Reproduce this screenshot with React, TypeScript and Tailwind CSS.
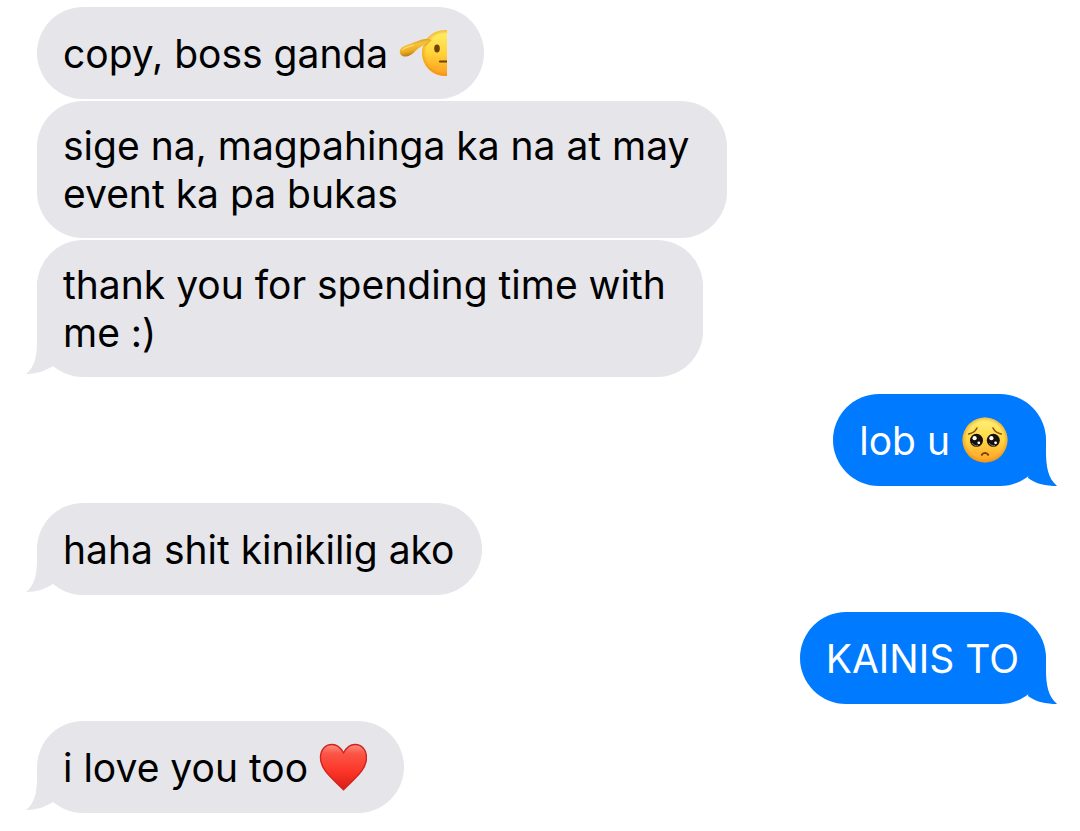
import { Fragment } from "react";
import type { ReactNode } from "react";
import clsx from "clsx";

interface Message {
  id: number;
  lines: string[];
  emoji?: ReactNode;
  trailing?: boolean;
}

interface MessageGroup {
  from: "me" | "them";
  messages: Message[];
}

const groups: MessageGroup[] = [
  {
    from: "them",
    messages: [
      { id: 1, lines: ["copy, boss ganda"], emoji: <SaluteEmoji />, trailing: true },
      {
        id: 2,
        lines: ["sige na, magpahinga ka na at may", "event ka pa bukas"],
        trailing: true,
      },
      { id: 3, lines: ["thank you for spending time with", "me :)"], trailing: true },
    ],
  },
  { from: "me", messages: [{ id: 4, lines: ["lob u"], emoji: <PleadingEmoji />, trailing: true }] },
  { from: "them", messages: [{ id: 5, lines: ["haha shit kinikilig ako"] }] },
  { from: "me", messages: [{ id: 6, lines: ["KAINIS TO"] }] },
  { from: "them", messages: [{ id: 7, lines: ["i love you too"], emoji: <HeartEmoji />, trailing: true }] },
];

const App = () => {
  return (
    <main className="flex flex-col gap-[17px] bg-white pt-[7px] pb-[18px] pl-[37px] pr-[34px] font-['Inter',sans-serif] text-[39px] leading-[48px]">
      {groups.map((group) => (
        <ul
          key={group.messages[0].id}
          className={clsx("flex flex-col gap-[2px]", group.from === "me" ? "items-end" : "items-start")}
        >
          {group.messages.map((message, i) => (
            <Bubble
              key={message.id}
              message={message}
              from={group.from}
              hasTail={i === group.messages.length - 1}
            />
          ))}
        </ul>
      ))}
    </main>
  );
};

function Bubble({
  message,
  from,
  hasTail,
}: {
  message: Message;
  from: "me" | "them";
  hasTail: boolean;
}) {
  return (
    <li
      className={clsx(
        "relative flex min-h-[92px] max-w-full items-center rounded-[46px] pt-[21px] pb-[20px] pl-[26px]",
        message.trailing ? "pr-[37px]" : "pr-[27px]",
        from === "me" ? "bg-[#007aff] text-white" : "bg-[#e5e5ea] text-black"
      )}
    >
      <p>
        {message.lines.map((line, i) => (
          <Fragment key={line}>
            {i > 0 && <br />}
            {line}
          </Fragment>
        ))}
        {message.emoji && <> {message.emoji}</>}
      </p>
      {hasTail && (from === "me" ? <RightTail /> : <LeftTail />)}
    </li>
  );
}

function LeftTail() {
  return (
    <svg
      className="absolute bottom-0 -left-[11px]"
      width="40"
      height="50"
      viewBox="0 0 40 50"
      fill="#e5e5ea"
      aria-hidden="true"
    >
      <path d="M11 3 V14 C11 29 9 40 0 47 C10 47 19 44 27 39 L27 24 L13 3 Z" />
    </svg>
  );
}

function RightTail() {
  return (
    <svg
      className="absolute bottom-0 -right-[11px]"
      width="40"
      height="50"
      viewBox="0 0 40 50"
      fill="#007aff"
      aria-hidden="true"
    >
      <path d="M29 3 V15 C29 31 31 42 40 50 C29 50 19 48 11 42 L14 24 L27 3 Z" />
    </svg>
  );
}

function SaluteEmoji() {
  return (
    <svg
      className="inline-block align-[-9px]"
      width="48"
      height="48"
      viewBox="0 0 48 48"
      role="img"
      aria-label="saluting face"
    >
      <defs>
        <linearGradient id="salute-face" x1="0" y1="0" x2="0" y2="1">
          <stop offset="0" stopColor="#fff06a" />
          <stop offset="0.5" stopColor="#ffd338" />
          <stop offset="1" stopColor="#ff9c1c" />
        </linearGradient>
        <radialGradient id="salute-edge">
          <stop offset="0.82" stopColor="#e88a0c" stopOpacity="0" />
          <stop offset="1" stopColor="#e88a0c" stopOpacity="0.55" />
        </radialGradient>
        <linearGradient id="salute-hand" x1="0.3" y1="0" x2="0.6" y2="1">
          <stop offset="0" stopColor="#c98a14" />
          <stop offset="0.35" stopColor="#f5c33b" />
          <stop offset="0.65" stopColor="#e9ab25" />
          <stop offset="1" stopColor="#a4650b" />
        </linearGradient>
      </defs>
      <circle cx="46" cy="24" r="23" fill="url(#salute-face)" />
      <circle cx="46" cy="24" r="23" fill="url(#salute-edge)" />
      <path d="M25 18 C29 15 31 13 33 11 L29 10 Z" fill="#c9860f" opacity="0.45" />
      <path
        d="M0.8 22.5 C1 18 6 16.5 12 14.5 C18 12.5 25 9 30 10 C31.5 10.5 31 11.8 29.5 12.8 C25 16 20 18.5 17 21.5 C13 25.5 10 27.5 6 27.5 C2.5 27.5 0.8 25 0.8 22.5 Z"
        fill="url(#salute-hand)"
      />
      <path d="M3.5 21 C5 18.5 10 18 14 16.2" stroke="#ffe07a" strokeWidth="1.2" fill="none" strokeLinecap="round" opacity="0.8" />
      <ellipse cx="38" cy="19.5" rx="2.8" ry="4.1" fill="#70420a" />
      <path d="M41 32.5 H48" stroke="#70420a" strokeWidth="2.2" strokeLinecap="round" />
    </svg>
  );
}

function PleadingEmoji() {
  return (
    <svg
      className="inline-block align-[-9px]"
      width="48"
      height="48"
      viewBox="0 0 48 48"
      role="img"
      aria-label="pleading face"
    >
      <defs>
        <linearGradient id="plead-face" x1="0" y1="0" x2="0" y2="1">
          <stop offset="0" stopColor="#fff27a" />
          <stop offset="0.5" stopColor="#ffd644" />
          <stop offset="1" stopColor="#ffa023" />
        </linearGradient>
        <radialGradient id="plead-edge">
          <stop offset="0.82" stopColor="#e88a0c" stopOpacity="0" />
          <stop offset="1" stopColor="#e88a0c" stopOpacity="0.55" />
        </radialGradient>
      </defs>
      <circle cx="24" cy="24" r="22.5" fill="url(#plead-face)" />
      <circle cx="24" cy="24" r="22.5" fill="url(#plead-edge)" />
      <path
        d="M7.7 18 C11.5 17.3 14.5 15 16 12 M40.3 18 C36.5 17.3 33.5 15 32 12"
        stroke="#8a4f0c"
        strokeWidth="1.6"
        strokeLinecap="round"
        fill="none"
      />
      <circle cx="15.5" cy="24.3" r="6.5" fill="#17110d" />
      <circle cx="32.3" cy="24.3" r="6.5" fill="#17110d" />
      <circle cx="13.6" cy="22.2" r="2.1" fill="#fff" />
      <circle cx="30.4" cy="22.2" r="2.1" fill="#fff" />
      <circle cx="17.8" cy="26.8" r="1.4" fill="#fff" />
      <circle cx="34.6" cy="26.8" r="1.4" fill="#fff" />
      <path d="M11 27 C12.5 29.5 15 30 17 29.5 M28 27 C29.5 29.5 32 30 34 29.5" stroke="#8b8580" strokeWidth="0.9" fill="none" />
      <path d="M20.8 38.8 C21.8 36.3 26.2 36.3 27.2 38.8" stroke="#7a3f0c" strokeWidth="2" strokeLinecap="round" fill="none" />
    </svg>
  );
}

function HeartEmoji() {
  return (
    <svg
      className="inline-block align-[-9px]"
      width="48"
      height="48"
      viewBox="0 0 48 48"
      role="img"
      aria-label="red heart"
    >
      <defs>
        <linearGradient id="heart-fill" x1="0" y1="0" x2="0" y2="1">
          <stop offset="0" stopColor="#ff8f80" />
          <stop offset="0.2" stopColor="#fb5546" />
          <stop offset="0.6" stopColor="#fb3528" />
          <stop offset="1" stopColor="#d81c16" />
        </linearGradient>
      </defs>
      <path
        d="M24.5 10 C21.5 4.2 17.5 1.5 13 1.5 C6 1.5 1.5 7 1.5 14.5 C1.5 27 13 35 24.5 46.8 C36 35 47.5 27 47.5 14.5 C47.5 7 43 1.5 36 1.5 C31.5 1.5 27.5 4.2 24.5 10 Z"
        fill="url(#heart-fill)"
        stroke="#d0231d"
        strokeWidth="1.4"
        strokeLinejoin="round"
      />
    </svg>
  );
}

export default App;
